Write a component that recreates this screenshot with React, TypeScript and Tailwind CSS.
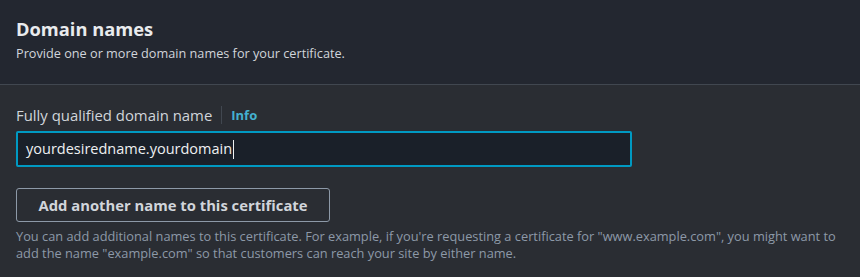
export default function App() {
  return (
    <div className="w-[860px] h-[277px] bg-[#2a2d33] text-[#e9ebed]" style={{ fontFamily: '"Open Sans", "Noto Sans", sans-serif' }}>
      <header className="bg-[#232730] h-[85px] border-b border-[#414750] px-4 pt-[17px]">
        <h2 className="text-[18.3px] font-bold leading-[24px] text-[#e9ebed]">Domain names</h2>
        <p className="text-[12.7px] leading-[20px] mt-[2px] text-[#d1d5db]">Provide one or more domain names for your certificate.</p>
      </header>
      <div className="px-4 pt-[20px]">
        <div className="flex items-center h-[20px]">
          <span className="text-[14.9px] text-[#d1d5db]">Fully qualified domain name</span>
          <span className="mx-[9px] h-[18px] w-px bg-[#414750]" />
          <a className="text-[13px] font-bold text-[#44b1d1] pt-[2px]">Info</a>
        </div>
        <div className="mt-[6px] w-[616px] h-[36px] border-2 border-[#0099c2] rounded-[2px] bg-[#1a2029] flex items-center pl-[8px]">
          <span className="text-[14.5px] text-[#eef0f2]">yourdesiredname.yourdomain</span>
          <span className="ml-px h-[19px] w-px bg-[#eef0f2]" />
        </div>
        <button className="mt-[21px] h-[34px] w-[314px] border border-[#8d99a8] rounded-[3px] text-[14.8px] font-bold text-[#d1d5db]">
          Add another name to this certificate
        </button>
        <p className="mt-[6px] w-[830px] text-[12.8px] leading-[17px] text-[#8d99a8]">
          You can add additional names to this certificate. For example, if you're requesting a certificate for "www.example.com", you might want to add the name "example.com" so that customers can reach your site by either name.
        </p>
      </div>
    </div>
  );
}
